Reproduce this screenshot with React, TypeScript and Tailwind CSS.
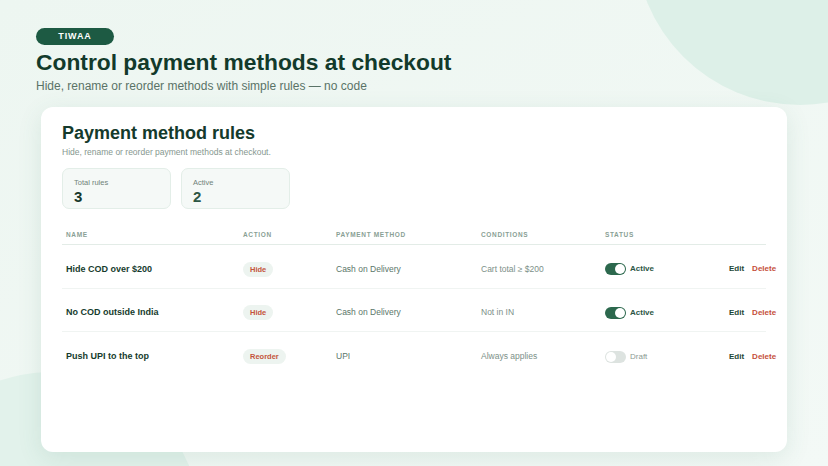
const rules = [
  { name: "Hide COD over $200", action: "Hide", method: "Cash on Delivery", cond: "Cart total ≥ $200", active: true },
  { name: "No COD outside India", action: "Hide", method: "Cash on Delivery", cond: "Not in IN", active: true },
  { name: "Push UPI to the top", action: "Reorder", method: "UPI", cond: "Always applies", active: false },
];

function Toggle({ on }: { on: boolean }) {
  return (
    <span
      className={
        "flex h-[12px] w-[21px] items-center rounded-full px-[1px] " +
        (on ? "justify-end bg-[#2c684d]" : "justify-start bg-[#dde3e0]")
      }
    >
      <span className="h-[10px] w-[10px] rounded-full bg-white" />
    </span>
  );
}

const cols = "grid grid-cols-[177px_93px_145px_124px_124px_max-content] pl-[4px]";

export default function App() {
  return (
    <div
      className="relative h-[466px] w-[828px] overflow-hidden bg-gradient-to-br from-[#edf6f1] to-[#f3f9f6] font-['Liberation_Sans',Arial,sans-serif]"
    >
      <div className="absolute left-[635px] top-[-225px] h-[330px] w-[330px] rounded-full bg-[#ddf0e8]" />
      <div className="absolute left-[-100px] top-[372px] h-[300px] w-[300px] rounded-full bg-[#e2f2eb]" />

      <div className="relative pl-[36px] pt-[28px]">
        <div className="flex h-[17px] w-[78px] items-center justify-center rounded-full bg-[#1d5a43] text-[9px] font-bold tracking-[0.1em] text-white">
          TIWAA
        </div>
        <h1 className="mt-[3px] text-[22.8px] font-bold leading-[28px] text-[#123a2b]">
          Control payment methods at checkout
        </h1>
        <p className="mt-[2px] text-[12px] leading-[16px] text-[#5a7367]">
          Hide, rename or reorder methods with simple rules — no code
        </p>
      </div>

      <div className="relative ml-[41px] mt-[13px] h-[345px] w-[746px] rounded-[12px] bg-white px-[21px] pt-[14px] shadow-[0_6px_24px_rgba(60,120,95,0.12)]">
        <h2 className="text-[18px] font-bold leading-[24px] text-[#143a2c]">Payment method rules</h2>
        <p className="mt-[1px] text-[8.5px] leading-[12px] text-[#86978f]">
          Hide, rename or reorder payment methods at checkout.
        </p>

        <div className="mt-[10px] flex gap-[10px]">
          {[
            ["Total rules", "3", "text-[#17382b]"],
            ["Active", "2", "text-[#2d5745]"],
          ].map(([label, value, color]) => (
            <div
              key={label}
              className="h-[41px] w-[109px] rounded-[7px] border border-[#e3eee8] bg-[#f5f9f7] pl-[11px] pt-[9px]"
            >
              <div className="text-[7.5px] leading-[10px] text-[#6f8379]">{label}</div>
              <div className={"text-[15px] font-bold leading-[17px] " + color}>{value}</div>
            </div>
          ))}
        </div>

        <div className="mt-[21px] w-[704px]">
          <div className={cols + " h-[15px] border-b border-[#e3ece7] text-[6.5px] font-bold leading-[10px] tracking-[0.1em] text-[#8a9f95]"}>
            <span>NAME</span>
            <span>ACTION</span>
            <span>PAYMENT METHOD</span>
            <span>CONDITIONS</span>
            <span>STATUS</span>
            <span />
          </div>
          {rules.map((r, i) => (
            <div
              key={r.name}
              className={
                cols +
                " h-[43.5px] items-center pt-[6px] " +
                (i < rules.length - 1 ? "border-b border-[#f0f4f2]" : "")
              }
            >
              <span className="text-[9px] font-bold text-[#163b2d]">{r.name}</span>
              <span className="flex">
                <span className="flex h-[15px] items-center rounded-full bg-[#edf4f0] px-[7px] text-[7.5px] font-bold text-[#c4543c]">
                  {r.action}
                </span>
              </span>
              <span className="text-[8.5px] text-[#5b776a]">{r.method}</span>
              <span className="text-[8.5px] text-[#7c9088]">{r.cond}</span>
              <span className="flex items-center gap-[4px]">
                <Toggle on={r.active} />
                {r.active ? (
                  <span className="text-[8px] font-bold text-[#2b5645]">Active</span>
                ) : (
                  <span className="text-[8px] text-[#8b9a93]">Draft</span>
                )}
              </span>
              <span className="flex gap-[8px] text-[8px] font-bold">
                <span className="text-[#1c4636]">Edit</span>
                <span className="text-[#c5503b]">Delete</span>
              </span>
            </div>
          ))}
        </div>
      </div>
    </div>
  );
}
